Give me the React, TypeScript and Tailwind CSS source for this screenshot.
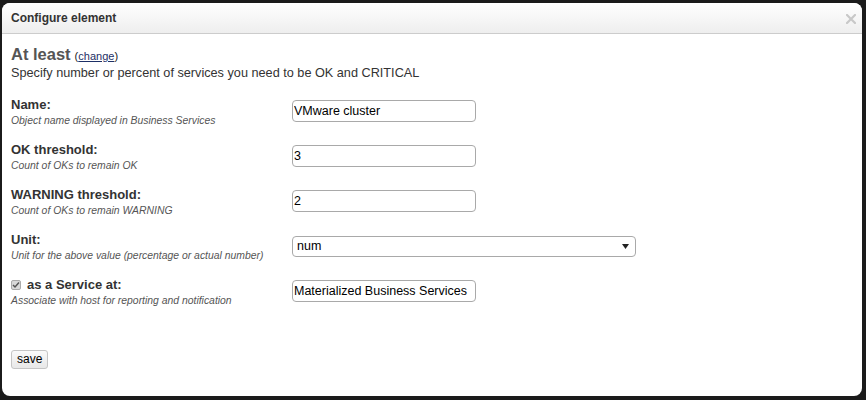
import React from 'react';

const rows = [
  { label: 'Name:', help: 'Object name displayed in Business Services', value: 'VMware cluster' },
  { label: 'OK threshold:', help: 'Count of OKs to remain OK', value: '3' },
  { label: 'WARNING threshold:', help: 'Count of OKs to remain WARNING', value: '2' },
];

const Label: React.FC<{ label: React.ReactNode; help: string }> = ({ label, help }) => (
  <div className="w-[281px] shrink-0">
    <div className="text-[13px] leading-[16px] font-bold text-[#333]">{label}</div>
    <div className="text-[10.4px] leading-[13px] italic text-[#555] mt-[1px]">{help}</div>
  </div>
);

const App: React.FC = () => {
  return (
    <div className="w-[866px] h-[400px] bg-[#1b1b1b] pt-[3px] pl-[2px] font-['Liberation_Sans',Arial,sans-serif]">
      <div className="w-[860px] h-[393px] bg-white rounded-[8px] overflow-hidden flex flex-col">
        {/* header */}
        <div className="h-[31px] shrink-0 flex items-center justify-between pl-[9px] pr-[6px] bg-gradient-to-b from-[#ffffff] to-[#eeeeee] border-b border-[#cccccc]">
          <span className="text-[12px] font-bold text-[#333]">Configure element</span>
          <svg width="10" height="10" viewBox="0 0 10 10" className="mt-[1px]">
            <path d="M1 1 L9 9 M9 1 L1 9" stroke="#c8c8c8" strokeWidth="2.2" strokeLinecap="square" />
          </svg>
        </div>

        <div className="px-[9px] pt-[9px] flex flex-col">
          <div className="flex items-baseline gap-[4px]">
            <span className="text-[16.5px] leading-[22px] font-bold text-[#555]">At least</span>
            <span className="text-[11px] text-[#222]">
              (<a className="underline text-[#1d2f66] cursor-pointer">change</a>)
            </span>
          </div>
          <div className="text-[12.7px] leading-[17px] text-[#333]">
            Specify number or percent of services you need to be OK and CRITICAL
          </div>

          <div className="flex flex-col mt-[15px]">
            {rows.map((r) => (
              <div key={r.label} className="flex items-start h-[45px]">
                <Label label={r.label} help={r.help} />
                <input
                  defaultValue={r.value}
                  className="mt-[3px] w-[184px] h-[22px] border border-[#a9a9a9] rounded-[4px] px-[1px] text-[12.5px] text-black outline-none"
                />
              </div>
            ))}
            <div className="flex items-start h-[45px]">
              <Label label="Unit:" help="Unit for the above value (percentage or actual number)" />
              <div className="mt-[4px] w-[344px] h-[21px] border border-[#a9a9a9] rounded-[4px] flex items-center justify-between pl-[4px] pr-[6px]">
                <span className="text-[12.5px] text-black">num</span>
                <svg width="7" height="5" viewBox="0 0 7 5">
                  <path d="M0 0 L7 0 L3.5 5 Z" fill="#222" />
                </svg>
              </div>
            </div>
            <div className="flex items-start h-[45px]">
              <Label
                label={
                  <span className="flex items-center gap-[6px]">
                    <span className="w-[10px] h-[10px] bg-[#d8d8d8] border border-[#aaa] rounded-[2px] flex items-center justify-center">
                      <svg width="8" height="8" viewBox="0 0 8 8">
                        <path d="M1 4 L3 6 L7 1.5" stroke="#555" strokeWidth="1.5" fill="none" />
                      </svg>
                    </span>
                    as a Service at:
                  </span>
                }
                help="Associate with host for reporting and notification"
              />
              <input
                defaultValue="Materialized Business Services"
                className="mt-[3px] w-[184px] h-[22px] border border-[#a9a9a9] rounded-[4px] px-[1px] text-[12.5px] text-black outline-none"
              />
            </div>
          </div>

          <div className="mt-[24px]">
            <button className="h-[19px] px-[5px] border border-[#c5c5c5] rounded-[3px] bg-gradient-to-b from-[#fafafa] to-[#e8e8e8] text-[12px] leading-[15px] text-black">
              save
            </button>
          </div>
        </div>
      </div>
    </div>
  );
};

export default App;
